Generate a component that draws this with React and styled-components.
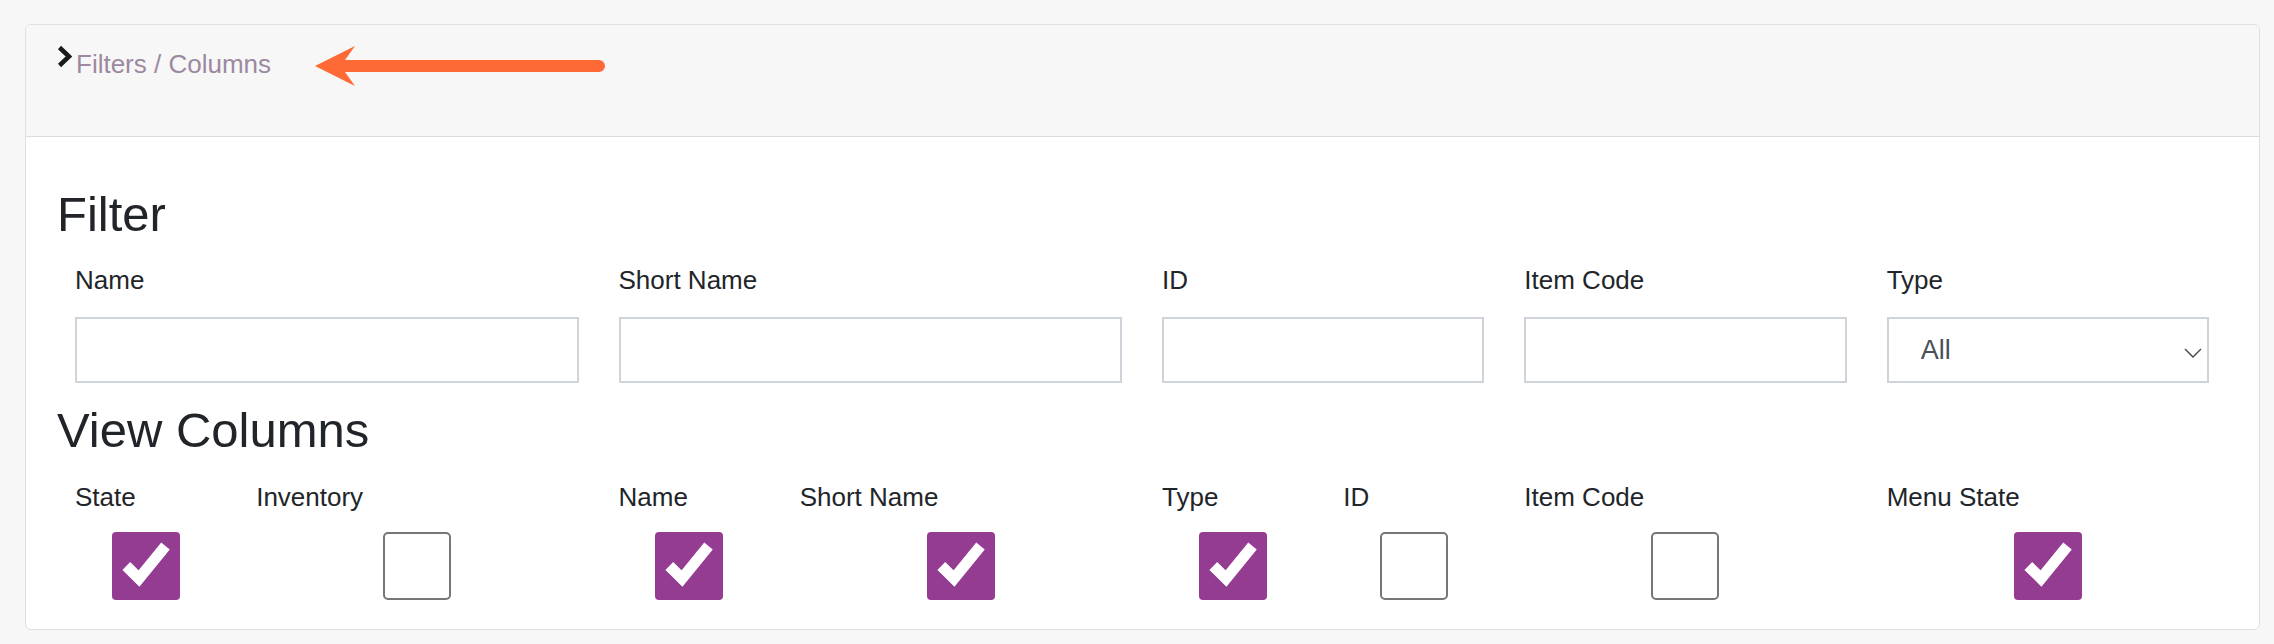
import React from 'react';
import styled, { createGlobalStyle } from 'styled-components';

const GlobalStyle = createGlobalStyle`
  html, body {
    margin: 0;
    padding: 0;
    background: #f7f7f7;
    font-family: "Liberation Sans", Arial, Helvetica, sans-serif;
    color: #212529;
  }
  * {
    box-sizing: border-box;
  }
`;

const Page = styled.div`
  padding: 24px 14px 13px 25px;
`;

const Card = styled.section`
  border: 1px solid #dfdfdf;
  border-radius: 6px;
  background: #fff;
  overflow: hidden;
`;

const Header = styled.header`
  display: flex;
  align-items: flex-start;
  height: 112px;
  padding: 24px 0 0 31px;
  background: #f7f7f7;
  border-bottom: 1px solid #dcdcdc;
`;

const Chevron = styled.svg`
  flex: none;
  margin-top: -4px;
`;

const Toggle = styled.span`
  font-size: 26px;
  line-height: 30px;
  color: #9c89a1;
  margin-left: 3px;
`;

const Pointer = styled.svg`
  flex: none;
  margin: -3px 0 0 44px;
`;

const Body = styled.div`
  padding: 49px 30px 29px 29px;
`;

const Heading = styled.h3`
  margin: ${({ $top }) => $top || '0'} 0 ${({ $bottom }) => $bottom || '0'} 2px;
  font-size: 49px;
  font-weight: 400;
  line-height: 56px;
  color: #212529;
`;

const Grid = styled.div`
  display: grid;
  grid-template-columns: repeat(12, 1fr);
`;

const Field = styled.div`
  grid-column: span ${({ $span }) => $span};
  padding: 0 20px;
  display: flex;
  flex-direction: column;
  min-width: 0;
`;

const Label = styled.label`
  font-size: 26px;
  line-height: 30px;
  color: #212529;
  white-space: nowrap;
`;

const TextInput = styled.input`
  width: 100%;
  height: 66px;
  margin-top: 22px;
  border: 2px solid #ced4da;
  border-radius: 0;
  background: #fff;
  outline: none;
`;

const SelectWrap = styled.div`
  position: relative;
  margin-top: 22px;
`;

const Select = styled.select`
  width: 100%;
  height: 66px;
  padding: 0 40px 0 32px;
  border: 2px solid #ced4da;
  border-radius: 0;
  background: #fff;
  font-family: "Liberation Sans", Arial, sans-serif;
  font-size: 27px;
  color: #495057;
  appearance: none;
  -webkit-appearance: none;
  outline: none;
`;

const Caret = styled.svg`
  position: absolute;
  right: 7px;
  top: 31px;
  pointer-events: none;
`;

const ColumnItem = styled(Field)`
  align-items: flex-start;
`;

const Box = styled.span`
  align-self: center;
  display: flex;
  align-items: center;
  justify-content: center;
  width: 68px;
  height: 68px;
  margin-top: 20px;
  border-radius: ${({ $checked }) => ($checked ? '4px' : '5px')};
  border: ${({ $checked }) => ($checked ? 'none' : '2px solid #777')};
  background: ${({ $checked }) => ($checked ? '#943c92' : '#fff')};
`;

const Check = ({ checked }) => (
  <Box $checked={checked} role="checkbox" aria-checked={checked}>
    {checked && (
      <svg width="68" height="68" viewBox="0 0 68 68">
        <polyline
          points="14.3,34 27,46.5 53.5,14"
          fill="none"
          stroke="#fff"
          strokeWidth="11"
          strokeLinecap="butt"
          strokeLinejoin="miter"
        />
      </svg>
    )}
  </Box>
);

const filters = [
  { label: 'Name', span: 3 },
  { label: 'Short Name', span: 3 },
  { label: 'ID', span: 2 },
  { label: 'Item Code', span: 2 },
];

const columns = [
  { label: 'State', span: 1, checked: true },
  { label: 'Inventory', span: 2, checked: false },
  { label: 'Name', span: 1, checked: true },
  { label: 'Short Name', span: 2, checked: true },
  { label: 'Type', span: 1, checked: true },
  { label: 'ID', span: 1, checked: false },
  { label: 'Item Code', span: 2, checked: false },
  { label: 'Menu State', span: 2, checked: true },
];

export default function App() {
  return (
    <Page>
      <GlobalStyle />
      <Card>
        <Header>
          <Chevron width="16" height="23" viewBox="0 0 16 23">
            <polyline points="2.5,2.5 12,11.5 2.5,20.5" fill="none" stroke="#1b1b1b" strokeWidth="4.5" />
          </Chevron>
          <Toggle>Filters / Columns</Toggle>
          <Pointer width="292" height="40" viewBox="0 0 292 40">
            <path
              d="M0 20 L40 0 L30 14 L284 14 A6 6 0 0 1 284 26 L30 26 L40 40 Z"
              fill="#ff6936"
            />
          </Pointer>
        </Header>
        <Body>
          <Heading $bottom="23px">Filter</Heading>
          <Grid>
            {filters.map(f => (
              <Field key={f.label} $span={f.span}>
                <Label>{f.label}</Label>
                <TextInput type="text" />
              </Field>
            ))}
            <Field $span={2}>
              <Label>Type</Label>
              <SelectWrap>
                <Select defaultValue="all">
                  <option value="all">All</option>
                </Select>
                <Caret width="18" height="10" viewBox="0 0 18 10">
                  <polyline points="1,1 9,9 17,1" fill="none" stroke="#444" strokeWidth="1.4" />
                </Caret>
              </SelectWrap>
            </Field>
          </Grid>
          <Heading $top="19px" $bottom="24px">View Columns</Heading>
          <Grid>
            {columns.map(c => (
              <ColumnItem key={c.label} $span={c.span}>
                <Label>{c.label}</Label>
                <Check checked={c.checked} />
              </ColumnItem>
            ))}
          </Grid>
        </Body>
      </Card>
    </Page>
  );
}
